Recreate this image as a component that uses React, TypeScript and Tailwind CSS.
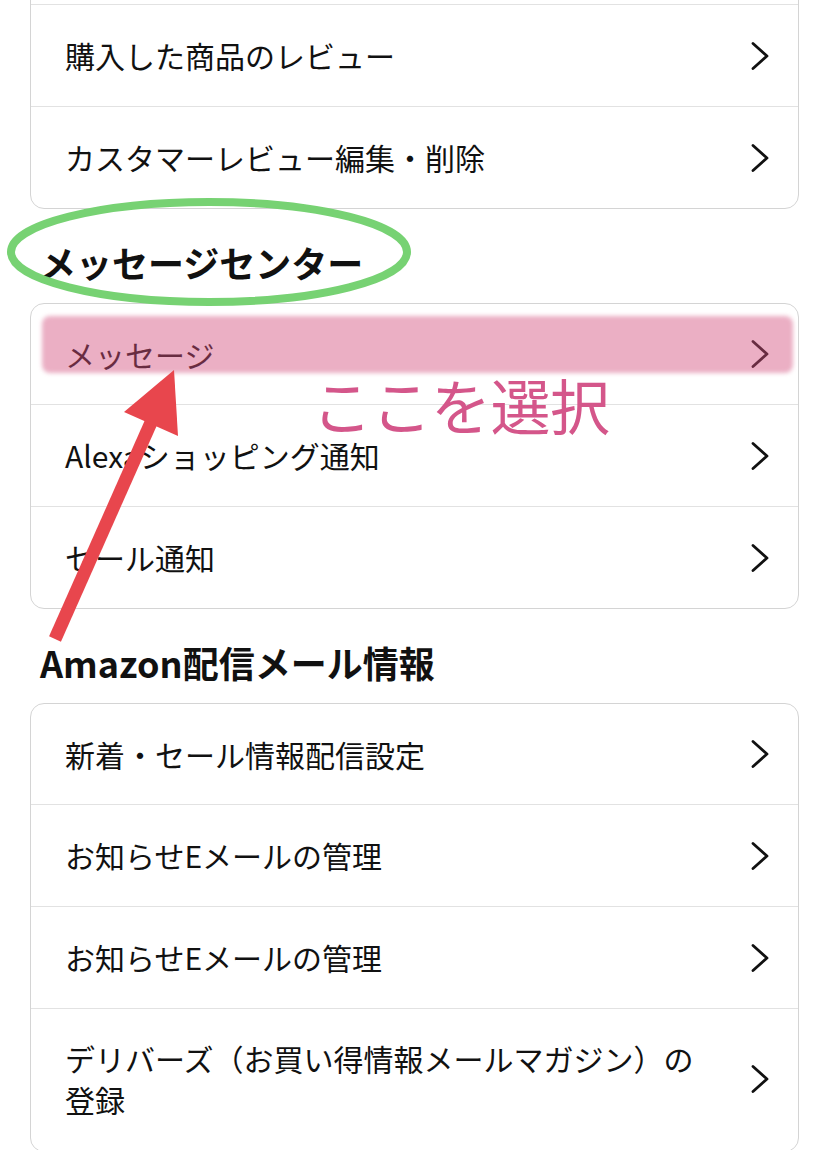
import React from "react";

const FONT = { fontFamily: '"Noto Sans CJK JP", "Noto Sans", sans-serif' };

function Chevron() {
  return (
    <svg width="20" height="28" viewBox="0 0 20 28" className="shrink-0">
      <polyline points="3,1.5 17,14 3,26.5" fill="none" stroke="#111" strokeWidth="2.8" strokeLinecap="round" strokeLinejoin="round" />
    </svg>
  );
}

function Row({ label, tall }: { label: string; tall?: boolean }) {
  return (
    <div
      className={`flex items-center justify-between pl-[34px] pr-[28px] ${
        tall ? "pt-[29px] pb-[31px]" : "h-[102px] first:h-[101px] last:h-[101px]"
      }`}
    >
      <span className={`text-[30px] leading-[41px] text-[#111] ${tall ? "w-[650px]" : ""}`}>{label}</span>
      <Chevron />
    </div>
  );
}

function Card({ rows, className = "" }: { rows: { label: string; tall?: boolean }[]; className?: string }) {
  return (
    <div className={`rounded-[14px] border border-[#d4d4d4] divide-y divide-[#e2e2e2] bg-white ${className}`}>
      {rows.map((r, i) => (
        <Row key={i} label={r.label} tall={r.tall} />
      ))}
    </div>
  );
}

function Heading({ children }: { children: React.ReactNode }) {
  return (
    <div className="h-[94px] pl-[10px] pt-[33px]">
      <h2 className="text-[36px] leading-[40px] font-bold text-[#111]">{children}</h2>
    </div>
  );
}

export default function App() {
  return (
    <div className="relative w-[827px] h-[1150px] overflow-hidden bg-white" style={FONT}>
      <div className="pl-[30px] pr-[28px]">
        <Card
          className="-mt-[97px]"
          rows={[{ label: "" }, { label: "購入した商品のレビュー" }, { label: "カスタマーレビュー編集・削除" }]}
        />
        <Heading>メッセージセンター</Heading>
        <Card rows={[{ label: "メッセージ" }, { label: "Alexaショッピング通知" }, { label: "セール通知" }]} />
        <Heading>Amazon配信メール情報</Heading>
        <Card
          rows={[
            { label: "新着・セール情報配信設定" },
            { label: "お知らせEメールの管理" },
            { label: "お知らせEメールの管理" },
            { label: "デリバーズ（お買い得情報メールマガジン）の登録", tall: true },
          ]}
        />
      </div>

      {/* pink highlight */}
      <div className="absolute left-[42px] top-[316px] w-[751px] h-[57px] rounded-[8px] bg-[#d34e7c]/45 blur-[2px]" />

      {/* annotation text */}
      <div className="absolute left-[312px] top-[374px] text-[60px] leading-[60px] text-[#d4568a] tracking-[-0.5px]">
        ここを選択
      </div>

      {/* ellipse and arrow */}
      <svg className="absolute left-0 top-0 pointer-events-none" width="827" height="1150" viewBox="0 0 827 1150">
        <ellipse cx="209" cy="252" rx="198" ry="50" fill="none" stroke="#77d273" strokeWidth="8" />
        <line x1="55" y1="639" x2="153" y2="418" stroke="#e8464d" strokeWidth="13" />
        <polygon points="174,370 124,412 178,436" fill="#e8464d" />
      </svg>
    </div>
  );
}
